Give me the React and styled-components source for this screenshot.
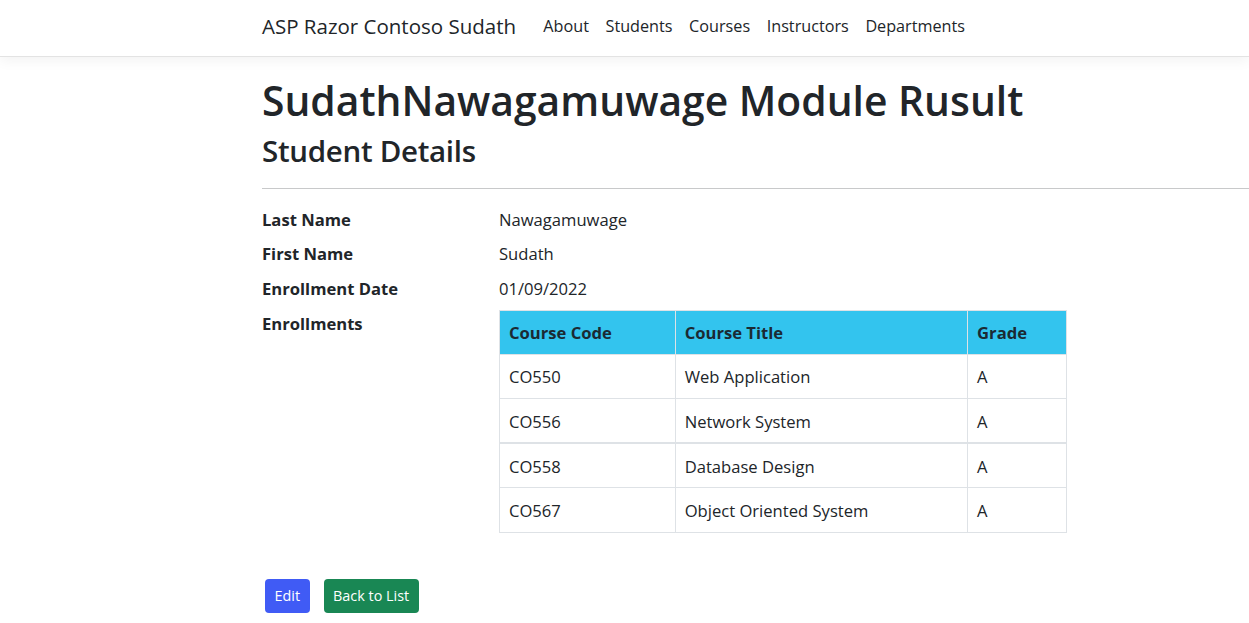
import React from "react";
import styled, { createGlobalStyle } from "styled-components";

const GlobalStyle = createGlobalStyle`
  html, body {
    margin: 0;
    padding: 0;
    background: #fff;
    color: #212529;
    font-family: "Open Sans", "Noto Sans", sans-serif;
    font-size: 16.6px;
    overflow: hidden;
  }
  * { box-sizing: border-box; }
`;

const Navbar = styled.nav`
  height: 57px;
  display: flex;
  align-items: center;
  padding-left: 262px;
  border-bottom: 1px solid #e3e3e3;
  box-shadow: 0 4px 12px rgba(0, 0, 0, 0.05);
`;

const Brand = styled.a`
  font-size: 20.5px;
  color: #212529;
  margin-right: 19px;
  text-decoration: none;
  padding-bottom: 4px;
`;

const NavLink = styled.a`
  font-size: 16.2px;
  color: #212529;
  padding: 0 8.3px;
  padding-bottom: 4px;
  text-decoration: none;
`;

const Main = styled.main`
  padding: 19px 0 0 262px;
`;

const Title = styled.h1`
  font-size: 40.8px;
  font-weight: 600;
  line-height: 1.2;
  margin: 0 0 8px;
`;

const SubTitle = styled.h2`
  font-size: 29.5px;
  font-weight: 600;
  letter-spacing: -0.3px;
  line-height: 1.25;
  margin: 0;
`;

const Rule = styled.hr`
  border: 0;
  border-top: 1px solid #c8c9ca;
  margin: 18px 0 18px;
`;

const Details = styled.dl`
  display: grid;
  grid-template-columns: 237px auto;
  row-gap: 8.6px;
  margin: 0;
  line-height: 26px;
`;

const Label = styled.dt`
  font-weight: 700;
`;

const Value = styled.dd`
  margin: 0;
`;

const Table = styled.table`
  border-collapse: collapse;
  width: 568px;
  margin-top: -1px;
`;

const HeadCell = styled.th`
  background: #33c4ee;
  text-align: left;
  font-weight: 700;
  color: #1b2a33;
  height: 44px;
  padding: 2px 9px 0;
  border: 1px solid #dee2e6;
  width: ${(p) => p.w}px;
`;

const Cell = styled.td`
  height: 44.5px;
  padding: 2px 9px 0;
  border: 1px solid #dee2e6;
  border-top-width: ${(p) => (p.thick ? 2 : 1)}px;
`;

const Actions = styled.div`
  display: flex;
  gap: 14px;
  margin: 46px 0 0 3px;
`;

const Button = styled.a`
  display: inline-flex;
  align-items: center;
  height: 34px;
  padding: 0 9.5px;
  font-size: 14.4px;
  color: #fff;
  background: ${(p) => p.bg};
  border-radius: 4px;
  text-decoration: none;
`;

const courses = [
  ["CO550", "Web Application", "A"],
  ["CO556", "Network System", "A"],
  ["CO558", "Database Design", "A"],
  ["CO567", "Object Oriented System", "A"],
];

export default function App() {
  return (
    <>
      <GlobalStyle />
      <Navbar>
        <Brand href="#">ASP Razor Contoso Sudath</Brand>
        <NavLink href="#">About</NavLink>
        <NavLink href="#">Students</NavLink>
        <NavLink href="#">Courses</NavLink>
        <NavLink href="#">Instructors</NavLink>
        <NavLink href="#">Departments</NavLink>
      </Navbar>
      <Main>
        <Title>SudathNawagamuwage Module Rusult</Title>
        <SubTitle>Student Details</SubTitle>
        <Rule />
        <Details>
          <Label>Last Name</Label>
          <Value>Nawagamuwage</Value>
          <Label>First Name</Label>
          <Value>Sudath</Value>
          <Label>Enrollment Date</Label>
          <Value>01/09/2022</Value>
          <Label>Enrollments</Label>
          <Value>
            <Table>
              <thead>
                <tr>
                  <HeadCell w={176}>Course Code</HeadCell>
                  <HeadCell w={293}>Course Title</HeadCell>
                  <HeadCell w={99}>Grade</HeadCell>
                </tr>
              </thead>
              <tbody>
                {courses.map((c, i) => (
                  <tr key={c[0]}>
                    {c.map((v, j) => (
                      <Cell key={j} thick={i === 2}>
                        {v}
                      </Cell>
                    ))}
                  </tr>
                ))}
              </tbody>
            </Table>
          </Value>
        </Details>
        <Actions>
          <Button href="#" bg="#405bf5">Edit</Button>
          <Button href="#" bg="#198754">Back to List</Button>
        </Actions>
      </Main>
    </>
  );
}
